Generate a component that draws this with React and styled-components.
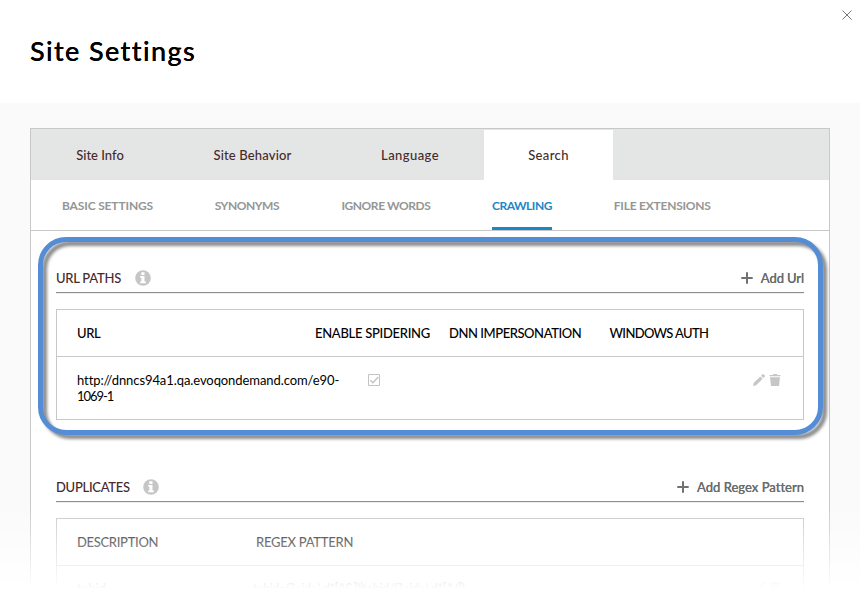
import React from "react";
import styled, { createGlobalStyle } from "styled-components";

const GlobalStyle = createGlobalStyle`
  *, *::before, *::after { box-sizing: border-box; }
  body { margin: 0; background: #fff; font-family: Lato, "Liberation Sans", sans-serif; font-weight: 500; font-size: 13px; }
  svg { display: block; }
`;

const Page = styled.div`
  position: relative;
  width: 860px;
  height: 590px;
  overflow: hidden;
  display: flex;
  flex-direction: column;
  background: #fafafa;
`;

const Header = styled.header`
  display: flex;
  justify-content: space-between;
  align-items: flex-start;
  flex: none;
  height: 103px;
  padding: 10px 8px 0 30px;
  background: #fff;
`;

const Title = styled.h1`
  margin: 25px 0 0;
  font-size: 27px;
  line-height: 32px;
  font-weight: 500;
  letter-spacing: 1.4px;
  color: #000;
  text-shadow: 0 0 0.5px #000;
`;

const CloseButton = styled.button`
  padding: 0;
  border: 0;
  background: none;
`;

const Text = styled.span`
  white-space: pre;
  letter-spacing: ${(p) => p.$ls || 0}px;
  font-variant-ligatures: none;
`;

const Panel = styled.main`
  position: relative;
  flex: none;
  width: 800px;
  height: 500px;
  margin: 25px 0 0 30px;
  border: 1px solid #c8c8c8;
  background: #fff;
`;

const Tabs = styled.nav`
  display: flex;
  height: 51px;
  padding-top: 1px;
  background: #e4e6e5;
`;

const Tab = styled.div`
  display: flex;
  align-items: center;
  justify-content: center;
  width: ${(p) => p.$w}px;
  padding-bottom: 1px;
  background: ${(p) => (p.$active ? "#fff" : "transparent")};
  color: #46292b;
`;

const SubTabs = styled.nav`
  display: flex;
  gap: 61.7px;
  height: 51px;
  padding-left: 31px;
  border-bottom: 1px solid #c8c8c8;
`;

const SubTab = styled.div`
  display: flex;
  align-items: center;
  width: ${(p) => p.$w}px;
  height: 50px;
  padding-top: ${(p) => (p.$active ? 4 : 1)}px;
  border-bottom: ${(p) => (p.$active ? "3px solid #1c88c3" : "0")};
  color: ${(p) => (p.$active ? "#1c88c3" : "#959695")};
  font-weight: 700;
  font-size: 12px;
`;

const Section = styled.section`
  display: flex;
  flex-direction: column;
  margin: ${(p) => p.$top}px 25px 0;
`;

const SectionHead = styled.div`
  display: flex;
  align-items: center;
  justify-content: space-between;
  height: 29px;
  padding-bottom: 1px;
  border-bottom: 1px solid #8f8f8f;
  box-shadow: 0 1px 0 #ededed;
`;

const SectionTitle = styled.div`
  display: flex;
  align-items: center;
  gap: ${(p) => p.$gap}px;
  color: #46292b;

  span { padding-top: 1px; }
`;

const AddButton = styled.button`
  display: flex;
  align-items: center;
  gap: 8px;
  padding: 0;
  border: 0;
  background: none;
  font: inherit;
  color: #6a6d6e;
  text-shadow: 0 0 0.5px #6a6d6e;

  span { padding-top: 1px; }
`;

const Table = styled.div`
  display: flex;
  flex-direction: column;
  margin-top: 16px;
  height: ${(p) => p.$h}px;
  border: 1px solid #c8c8c8;
`;

const TableRow = styled.div`
  display: grid;
  grid-template-columns: ${(p) => p.$cols};
  align-items: start;
  padding: ${(p) => p.$top || 15}px 20px 0;
  line-height: 16px;
  color: #000;
`;

const HeadRow = styled(TableRow)`
  flex: none;
  height: 47px;
  border-bottom: 1px solid #c8c8c8;
`;

const UrlCell = styled.div`
  display: flex;
  flex-direction: column;
  font-weight: 400;
`;

const CheckCell = styled.div`
  padding: 2px 0 0 53px;
`;

const Actions = styled.div`
  display: flex;
  justify-content: flex-end;
  gap: 4px;
  padding: 2px 2px 0 0;
`;

const Highlight = styled.div`
  position: absolute;
  left: 6.5px;
  top: 107.5px;
  width: 785px;
  height: 198px;
  border: 5px solid #548dd5;
  border-radius: 28px;
  filter: drop-shadow(4px 4px 1.5px rgba(0, 0, 0, 0.45));
  pointer-events: none;
`;

const Fade = styled.div`
  position: absolute;
  left: 0;
  right: 0;
  bottom: 0;
  height: 85px;
  background: linear-gradient(to bottom, rgba(255, 255, 255, 0), #fff 84px);
  pointer-events: none;
`;

const CloseIcon = () => (
  <svg width="10" height="10" viewBox="0 0 10 10">
    <path d="M.5 .5l9 9M9.5 .5l-9 9" stroke="#777" strokeWidth="1" fill="none" />
  </svg>
);

const InfoIcon = () => (
  <svg width="16" height="16" viewBox="0 0 16 16">
    <circle cx="8" cy="8" r="7.8" fill="#c6c6c6" />
    <path d="M6.3 2.3h3.2v2.6H6.3zM5.2 6h4.3v5.4h1.4v1.8H5.2v-1.8h1.2V7.8H5.2z" fill="#fff" />
  </svg>
);

const PlusIcon = () => (
  <svg width="12" height="12" viewBox="0 0 12 12">
    <path d="M6 .3v11.4M.3 6h11.4" stroke="#6f7273" strokeWidth="2" />
  </svg>
);

const CheckIcon = () => (
  <svg width="12" height="12" viewBox="0 0 12 12">
    <path d="M.5 .5h11v11H.5z" fill="none" stroke="#c3c3c3" />
    <path d="M2.3 6.2l2.6 2.5L10.3 3" fill="none" stroke="#c3c3c3" strokeWidth="1.5" />
  </svg>
);

const PencilIcon = () => (
  <svg width="12" height="12" viewBox="0 0 12 12">
    <path d="M0 12l.8-3.2 6.6-6.4 2.3 2.3-6.5 6.5zM8.1 1.7L9.6.3q.5-.4 1 0l1.2 1.2q.4.5 0 1L10.4 4z" fill="#c6c6c6" />
  </svg>
);

const TrashIcon = () => (
  <svg width="12" height="12" viewBox="0 0 12 12">
    <path d="M.5 1H4V0h4v1h3.5v1.2H.5zM1 3.2h10L10 12H2z" fill="#c6c6c6" />
  </svg>
);

const tabs = [
  { label: "Site Info", w: 138, ls: 0 },
  { label: "Site Behavior", w: 167, ls: 0.16 },
  { label: "Language", w: 148, ls: 0.42 },
  { label: "Search", w: 129, ls: 0.35, active: true },
];

const subTabs = [
  { label: "BASIC SETTINGS", w: 91, ls: -0.15 },
  { label: "SYNONYMS", w: 65, ls: -0.45 },
  { label: "IGNORE WORDS", w: 89, ls: -0.43 },
  { label: "CRAWLING", w: 60, ls: -0.5, active: true },
  { label: "FILE EXTENSIONS", w: 97, ls: -0.23 },
];

const urlCols = "238px 134px 160.5px 1fr auto";
const regexCols = "179px 1fr auto";

export default function App() {
  return (
    <Page>
      <GlobalStyle />
      <Header>
        <Title>Site Settings</Title>
        <CloseButton aria-label="Close"><CloseIcon /></CloseButton>
      </Header>
      <Panel>
        <Tabs>
          {tabs.map((t) => (
            <Tab key={t.label} $w={t.w} $active={t.active}><Text $ls={t.ls}>{t.label}</Text></Tab>
          ))}
        </Tabs>
        <SubTabs>
          {subTabs.map((t) => (
            <SubTab key={t.label} $w={t.w} $active={t.active}><Text $ls={t.ls}>{t.label}</Text></SubTab>
          ))}
        </SubTabs>

        <Section $top={33}>
          <SectionHead>
            <SectionTitle $gap={14}><Text $ls={-0.25}>URL PATHS</Text><InfoIcon /></SectionTitle>
            <AddButton><PlusIcon /><Text $ls={-0.1}>Add Url</Text></AddButton>
          </SectionHead>
          <Table $h={111}>
            <HeadRow $cols={urlCols}>
              <Text $ls={-0.4}>URL</Text>
              <Text $ls={-0.29}>ENABLE SPIDERING</Text>
              <Text $ls={-0.44}>DNN IMPERSONATION</Text>
              <Text $ls={-0.65}>WINDOWS AUTH</Text>
            </HeadRow>
            <TableRow $cols="238px 134px 1fr auto">
              <UrlCell>
                <Text $ls={-0.08}>http://dnncs94a1.qa.evoqondemand.com/e90-</Text>
                <Text $ls={-1.05}>1069-1</Text>
              </UrlCell>
              <CheckCell><CheckIcon /></CheckCell>
              <span />
              <Actions><PencilIcon /><TrashIcon /></Actions>
            </TableRow>
          </Table>
        </Section>

        <Section $top={53}>
          <SectionHead>
            <SectionTitle $gap={13}><Text $ls={-0.28}>DUPLICATES</Text><InfoIcon /></SectionTitle>
            <AddButton><PlusIcon /><Text $ls={0}>Add Regex Pattern</Text></AddButton>
          </SectionHead>
          <Table $h={120}>
            <HeadRow $cols={regexCols}>
              <Text $ls={-0.32}>DESCRIPTION</Text>
              <Text $ls={-0.26}>REGEX PATTERN</Text>
            </HeadRow>
            <TableRow $cols="176px 1fr auto" $top={14}>
              <Text>tabid</Text>
              <Text $ls={-0.58}>{"tabid=(?<id>\\d*[^&])|tabid/(?<id>\\d*[^/])"}</Text>
              <Actions><PencilIcon /><TrashIcon /></Actions>
            </TableRow>
          </Table>
        </Section>
        <Highlight />
      </Panel>
      <Fade />
    </Page>
  );
}
